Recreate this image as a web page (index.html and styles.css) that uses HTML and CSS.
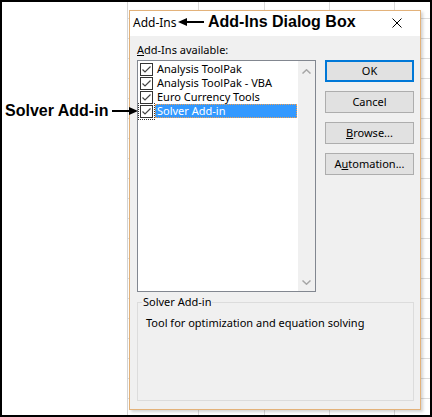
FILE: index.html
```html
<!DOCTYPE html>
<html lang="en">
<head>
<meta charset="utf-8">
<title>Add-Ins Dialog Box</title>
<link rel="stylesheet" href="styles.css">
</head>
<body>
<div class="frame">
  <div class="blank"></div>
  <div class="sheet">
    <div class="dialog">
      <div class="titlebar">
        <span class="title">Add-Ins</span>
        <span class="close"><svg width="10" height="10" viewBox="0 0 10 10"><path d="M0.5 0.5 L9.5 9.5 M9.5 0.5 L0.5 9.5" stroke="#000" stroke-width="1" fill="none"/></svg></span>
      </div>
      <div class="body">
        <div class="top">
          <div class="left">
            <div class="label"><u>A</u>dd-Ins available:</div>
            <div class="list">
              <div class="items">
                <div class="item">
                  <span class="cb"><svg width="13" height="13" viewBox="0 0 13 13"><rect x="0.5" y="0.5" width="12" height="12" fill="#fff" stroke="#333"/><path d="M2.5 6.5 L5 9 L10.5 3.5" stroke="#444" stroke-width="1.2" fill="none"/></svg></span>
                  <span class="name">Analysis ToolPak</span>
                </div>
                <div class="item">
                  <span class="cb"><svg width="13" height="13" viewBox="0 0 13 13"><rect x="0.5" y="0.5" width="12" height="12" fill="#fff" stroke="#333"/><path d="M2.5 6.5 L5 9 L10.5 3.5" stroke="#444" stroke-width="1.2" fill="none"/></svg></span>
                  <span class="name">Analysis ToolPak - VBA</span>
                </div>
                <div class="item">
                  <span class="cb"><svg width="13" height="13" viewBox="0 0 13 13"><rect x="0.5" y="0.5" width="12" height="12" fill="#fff" stroke="#333"/><path d="M2.5 6.5 L5 9 L10.5 3.5" stroke="#444" stroke-width="1.2" fill="none"/></svg></span>
                  <span class="name">Euro Currency Tools</span>
                </div>
                <div class="item selected">
                  <span class="cb"><svg width="13" height="13" viewBox="0 0 13 13"><rect x="0.5" y="0.5" width="12" height="12" fill="#fff" stroke="#333"/><path d="M2.5 6.5 L5 9 L10.5 3.5" stroke="#444" stroke-width="1.2" fill="none"/></svg></span>
                  <span class="name">Solver Add-in</span>
                </div>
              </div>
              <div class="scroll">
                <span class="arrow up"><svg width="9" height="5" viewBox="0 0 9 5"><path d="M0.5 4.5 L4.5 0.8 L8.5 4.5" stroke="#a6a6a6" stroke-width="1.5" fill="none"/></svg></span>
                <span class="arrow down"><svg width="9" height="5" viewBox="0 0 9 5"><path d="M0.5 0.5 L4.5 4.2 L8.5 0.5" stroke="#a6a6a6" stroke-width="1.5" fill="none"/></svg></span>
              </div>
            </div>
          </div>
          <div class="buttons">
            <button class="btn default">OK</button>
            <button class="btn">Cancel</button>
            <button class="btn"><u>B</u>rowse...</button>
            <button class="btn">A<u>u</u>tomation...</button>
          </div>
        </div>
        <fieldset class="group">
          <legend>Solver Add-in</legend>
          <p class="desc">Tool for optimization and equation solving</p>
        </fieldset>
      </div>
    </div>
  </div>
  <div class="note note-title">
    <svg width="26" height="10" viewBox="0 0 26 10"><polygon points="0,5 9,1 9,9" fill="#000"/><line x1="8" y1="5" x2="26" y2="5" stroke="#000" stroke-width="2"/></svg>
    <span>Add-Ins Dialog Box</span>
  </div>
  <div class="note note-solver">
    <span>Solver Add-in</span>
    <svg width="26" height="10" viewBox="0 0 26 10"><polygon points="26,5 17,1 17,9" fill="#000"/><line x1="0" y1="5" x2="18" y2="5" stroke="#000" stroke-width="2"/></svg>
  </div>
</div>
</body>
</html>
```

FILE: styles.css
```css
html, body {
  margin: 0;
  padding: 0;
  background: #fff;
}

.frame {
  position: relative;
  width: 432px;
  height: 417px;
  box-sizing: border-box;
  border: 2px solid #000;
  display: flex;
  background: #fff;
  overflow: hidden;
}

.blank {
  width: 125px;
  flex: none;
}

.sheet {
  flex: 1;
  padding: 8px 0 0 2px;
  background-color: #fff;
  background-image:
    linear-gradient(#d4d4d4, #d4d4d4),
    linear-gradient(#dadada, #dadada),
    linear-gradient(#dadada, #dadada),
    linear-gradient(#dadada, #dadada),
    linear-gradient(#dadada, #dadada),
    repeating-linear-gradient(to bottom, transparent 0, transparent 16px, #dcdcdc 16px, #dcdcdc 17px, transparent 17px, transparent 20px);
  background-size: 1px 100%, 1px 100%, 1px 100%, 1px 100%, 1px 100%, 100% 100%;
  background-position: 0 0, 71px 0, 137px 0, 202px 0, 267px 0, 0 0;
  background-repeat: no-repeat;
}

.dialog {
  width: 292px;
  height: 400px;
  box-sizing: border-box;
  border: 1px solid #e3b27a;
  background: #f0f0f0;
  display: flex;
  flex-direction: column;
  box-shadow: 2px 2px 3px rgba(0, 0, 0, 0.18);
  font-family: "Noto Sans", "Segoe UI", sans-serif;
  font-size: 11px;
  color: #000;
}

.titlebar {
  height: 25px;
  box-sizing: border-box;
  background: #fff;
  display: flex;
  align-items: center;
  padding: 0 0 1px 3px;
  flex: none;
}

.title {
  font-size: 12px;
  line-height: 16px;
}

.close {
  margin-left: auto;
  width: 46px;
  height: 24px;
  display: flex;
  align-items: center;
  justify-content: center;
}

.close svg {
  display: block;
}

.body {
  flex: 1;
  display: flex;
  flex-direction: column;
  padding: 7px 6px 8px 7px;
  min-height: 0;
}

.top {
  display: flex;
  gap: 9px;
  flex: none;
}

.left {
  width: 179px;
  flex: none;
}

.label {
  height: 14px;
  line-height: 14px;
  margin-bottom: 3px;
  white-space: nowrap;
}

.list {
  height: 232px;
  box-sizing: border-box;
  border: 1px solid #828790;
  background: #fff;
  display: flex;
}

.items {
  flex: 1;
  padding-top: 1px;
  min-width: 0;
}

.item {
  height: 14px;
  display: flex;
  align-items: center;
}

.cb {
  width: 13px;
  height: 13px;
  margin-left: 2px;
  margin-right: 2px;
  flex: none;
}

.cb svg {
  display: block;
}

.name {
  flex: 1;
  height: 14px;
  box-sizing: border-box;
  line-height: 14px;
  padding-left: 2px;
  margin-right: 1px;
  white-space: nowrap;
}

.item.selected .cb {
  outline: 1px dotted #333;
  outline-offset: 1px;
}

.item.selected .name {
  background: #3399ff;
  color: #fff;
  border: 1px dotted #f0a050;
  line-height: 12px;
  padding-left: 1px;
}

.scroll {
  width: 17px;
  flex: none;
  background: #f0f0f0;
  display: flex;
  flex-direction: column;
  justify-content: space-between;
}

.arrow {
  height: 17px;
  display: flex;
  align-items: center;
  justify-content: center;
}

.arrow.up {
  padding-top: 3px;
  height: 14px;
}

.arrow svg {
  display: block;
}

.buttons {
  width: 89px;
  flex: none;
  padding-top: 17px;
  display: flex;
  flex-direction: column;
  gap: 9px;
}

.btn {
  height: 22px;
  box-sizing: border-box;
  border: 1px solid #adadad;
  background: #e1e1e1;
  font-family: "Noto Sans", "Segoe UI", sans-serif;
  font-size: 11px;
  line-height: 18px;
  color: #000;
  padding: 0;
  margin: 0;
  border-radius: 0;
}

.btn.default {
  border-color: #0078d7;
  box-shadow: inset 0 0 0 1px #0078d7;
}

.group {
  flex: 1;
  margin: 3px 0 0 0;
  padding: 0 8px;
  border: 1px solid #dcdcdc;
  min-width: 0;
}

.group legend {
  padding: 0 1px;
  margin-left: -4px;
  line-height: 14px;
  font-size: 11px;
}

.desc {
  margin: 7px 0 0 0;
  line-height: 14px;
}

.note {
  position: absolute;
  display: flex;
  align-items: center;
  gap: 4px;
  height: 18px;
  font-family: "Liberation Sans", Arial, sans-serif;
  font-weight: bold;
  font-size: 16px;
  line-height: 18px;
  color: #000;
  white-space: nowrap;
}

.note svg {
  display: block;
}

.note-title {
  left: 176px;
  top: 11px;
}

.note-solver {
  left: 3px;
  top: 100px;
}
```
